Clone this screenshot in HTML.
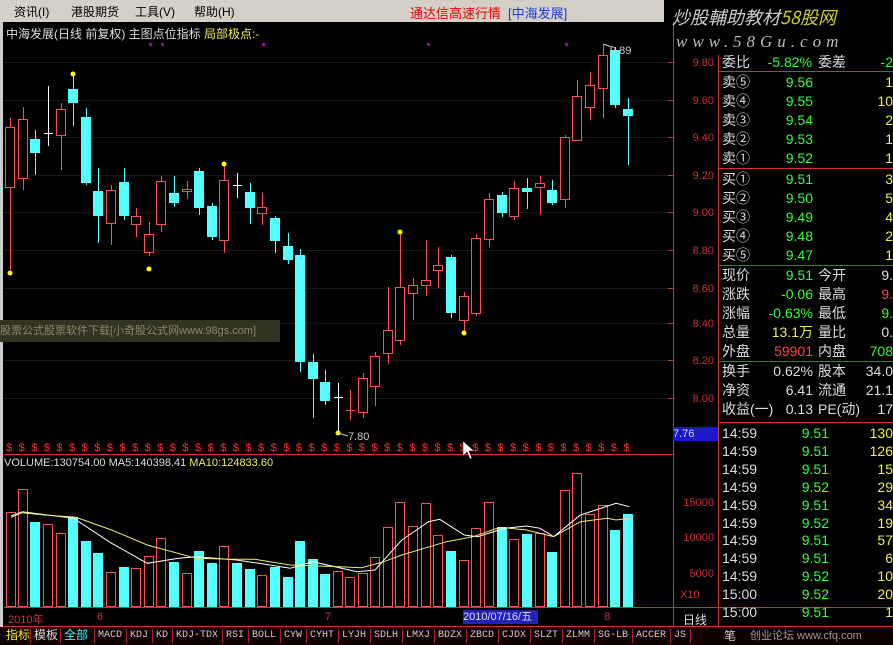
<!DOCTYPE html>
<html><head><meta charset="utf-8"><style>
body{margin:0;width:893px;height:645px;background:#000;overflow:hidden;position:relative;font-family:"Liberation Sans","Noto Sans CJK SC",sans-serif}
.a{position:absolute;white-space:nowrap}
#menu{position:absolute;left:0;top:0;width:664px;height:22px;background:#d4d0c8;font-size:12px}
.rp{position:absolute;font-size:14px;color:#ddd;line-height:19px}
</style></head><body>
<div id="menu">
<span class="a" style="left:14px;top:3px">资讯(I)</span>
<span class="a" style="left:71px;top:3px">港股期货</span>
<span class="a" style="left:135px;top:3px">工具(V)</span>
<span class="a" style="left:194px;top:3px">帮助(H)</span>
<span class="a" style="left:410px;top:3px;color:#e00;font-size:13px">通达信高速行情</span>
<span class="a" style="left:508px;top:3px;color:#1a3fd0;font-size:13px">[中海发展]</span>
</div>
<div class="a" style="left:0;top:22px;width:3px;height:605px;background:#ccc"></div>
<svg id="s" width="893" height="645" style="position:absolute;left:0;top:0" xmlns="http://www.w3.org/2000/svg"></svg>
<div class="a" style="left:672px;top:4px;font-size:18px;font-style:italic;color:#ccc;letter-spacing:0px;font-family:'Noto Sans CJK SC',sans-serif;z-index:5">炒股輔助教材<span style="color:#cc3">58股网</span></div>
<div class="a" style="left:676px;top:32px;font-size:17px;font-style:italic;color:#bbb;letter-spacing:5px;font-family:'Liberation Serif',serif;z-index:5">www.58Gu.com</div>
<div class="a" style="left:6px;top:25px;font-size:12px;color:#ddd">中海发展(日线 前复权) 主图点位指标 <span style="color:#ee6">局部极点:-</span></div>
<div class="a" style="left:0;top:320px;width:280px;height:22px;background:#333322;color:#888866;font-size:11px;line-height:22px">股票公式股票软件下载[小奇股公式网www.98gs.com]</div>
<div class="a" style="left:4px;top:457px;font-size:11px;color:#ddd">VOLUME:130754.00 MA5:140398.41 <span style="color:#ee6">MA10:124833.60</span></div>
<div class="a" style="left:610px;top:45px;font-size:11px;color:#ccc">9.89</div>
<div class="a" style="left:348px;top:431px;font-size:11px;color:#ccc">7.80</div>
<div class="a" style="left:673px;top:427px;width:45px;height:14px;background:#1a1acc;color:#ddd;font-size:11px;line-height:14px">7.76</div>
<div class="a" style="left:680px;top:589px;font-size:11px;color:#c33">X10</div>
<div class="a" style="left:8px;top:611px;font-size:11px;color:#c33">2010年</div>
<div class="a" style="left:97px;top:611px;font-size:11px;color:#c33">6</div>
<div class="a" style="left:325px;top:611px;font-size:11px;color:#c33">7</div>
<div class="a" style="left:463px;top:610px;width:75px;height:14px;background:#2222bb;color:#ddd;font-size:11px;line-height:14px">2010/07/16/五</div>
<div class="a" style="left:604px;top:611px;font-size:11px;color:#c33">8</div>
<div class="a" style="left:683px;top:611px;font-size:12px;color:#ddd">日线</div>
<div id="tabs" class="a" style="left:0;top:627px;width:893px;height:18px;background:#100;font-size:11px;line-height:18px;color:#ccc"></div>
<div id="rp"></div>
<script>
const S=document.getElementById('s');let h='';
function L(x1,y1,x2,y2,c,w){h+=`<line x1="${x1}" y1="${y1}" x2="${x2}" y2="${y2}" stroke="${c}" stroke-width="${w||1}"/>`}
function R(x,y,w,hh,f,st){h+=`<rect x="${x}" y="${y}" width="${w}" height="${hh}" fill="${f}" stroke="${st||'none'}"/>`}
function T(x,y,t,c,fs,anc){h+=`<text x="${x}" y="${y}" fill="${c}" font-size="${fs||11}" text-anchor="${anc||'start'}" font-family="Liberation Sans,sans-serif">${t}</text>`}
[62,100,137,175,212,250,288,323,360,398].forEach(y=>L(4,y+.5,672,y+.5,'#1a1a1a'));
[[62,'9.80'],[100,'9.60'],[137,'9.40'],[175,'9.20'],[212,'9.00'],[250,'8.80'],[288,'8.60'],[323,'8.40'],[360,'8.20'],[398,'8.00']].forEach(p=>{L(668,p[0]+.5,673,p[0]+.5,'#c33');T(714,p[0]+4,p[1],'#c33',11,'end')});
[[502,'15000'],[537,'10000'],[573,'5000']].forEach(p=>T(714,p[0]+4,p[1],'#c33',11,'end'));
L(673.5,22,673.5,627,'#c33');L(718.5,55,718.5,627,'#c33');
L(4,454.5,673,454.5,'#c33');L(4,607.5,893,607.5,'#c33');L(4,626.5,893,626.5,'#c33');
[71,168,265,361,422].forEach(y=>L(718,y+.5,893,y+.5,'#c33'));
const C=[[10,187,127,118,270,'r'],[23,178,119,107,190,'r'],[35,139,153,130,175,'c'],[48,133,133,86,146,'w'],[61,135,109,103,170,'r'],[73,89,103,76,126,'c'],[86,117,183,108,185,'c'],[98,191,216,168,243,'c'],[111,223,190,185,245,'r'],[124,182,216,168,220,'c'],[136,224,216,208,237,'r'],[149,252,234,222,256,'r'],[161,224,181,176,232,'r'],[174,193,203,176,207,'c'],[187,191,189,181,199,'r'],[199,171,208,168,215,'c'],[212,206,237,203,240,'c'],[224,240,180,163,253,'r'],[237,185,185,173,198,'w'],[250,192,208,183,224,'c'],[262,213,207,193,225,'r'],[275,218,241,216,253,'c'],[288,246,260,233,264,'c'],[300,255,362,249,372,'c'],[313,362,379,354,418,'c'],[325,382,401,370,405,'c'],[338,397,397,383,432,'w'],[350,411,410,390,420,'r'],[363,412,378,373,418,'r'],[375,386,356,352,406,'r'],[388,353,330,287,364,'r'],[400,340,287,231,345,'r'],[413,293,285,278,320,'r'],[426,285,280,240,296,'r'],[438,270,265,247,288,'r'],[451,257,313,255,318,'c'],[464,320,296,292,333,'r'],[476,313,238,234,316,'r'],[489,239,199,193,247,'r'],[502,195,213,192,217,'c'],[514,216,188,181,220,'r'],[527,188,192,178,209,'c'],[540,187,183,176,215,'r'],[552,190,203,180,205,'c'],[565,199,137,135,208,'r'],[577,140,96,80,140,'r'],[590,107,85,72,120,'r'],[603,88,55,45,118,'r'],[615,50,105,47,108,'c'],[628,109,116,98,165,'c']];
const RED='#ff5050',CY='#54ffff';
C.forEach(c=>{let[x,o,cl,hi,lo,t]=c;let top=Math.min(o,cl),bot=Math.max(o,cl);
 if(t=='w'){L(x+.5,hi,x+.5,lo,'#fff');L(x-4,o+.5,x+5,o+.5,'#fff');return}
 let col=t=='r'?RED:CY;L(x+.5,hi,x+.5,lo,col);
 if(t=='r'){if(bot-top<2)L(x-4,top+.5,x+5,top+.5,col);else R(x-4.5,top+.5,9,bot-top,'#000',col)}
 else R(x-5,top,10,Math.max(bot-top,2),col)});
[[10,273],[73,74],[149,269],[224,164],[338,433],[400,232],[464,333]].forEach(m=>h+=`<circle cx="${m[0]}" cy="${m[1]}" r="2.5" fill="#ff0"/>`);
L(338,433,348,436,'#ccc');L(603,44,612,47,'#ccc');
[150,162,263,428,566].forEach(x=>R(x-1,43,3,3,'#a0a'));
for(let x=6;x<635;x+=12.6)T(x,451,'$','#ff3030',11);
const V=[[11,512,'r'],[23,489,'r'],[35,522,'c'],[48,524,'r'],[61,533,'r'],[73,517,'c'],[86,541,'c'],[98,553,'c'],[111,572,'r'],[124,567,'c'],[136,568,'r'],[149,556,'r'],[161,538,'r'],[174,562,'c'],[187,573,'r'],[199,551,'c'],[212,563,'c'],[224,546,'r'],[237,563,'c'],[250,569,'c'],[262,575,'r'],[275,567,'c'],[288,577,'c'],[300,541,'c'],[313,559,'c'],[325,574,'c'],[338,571,'r'],[350,577,'r'],[363,573,'r'],[375,557,'r'],[388,527,'r'],[400,502,'r'],[413,526,'r'],[426,503,'r'],[438,535,'r'],[451,551,'c'],[464,560,'r'],[476,528,'r'],[489,502,'r'],[502,527,'c'],[514,539,'r'],[527,534,'c'],[540,533,'r'],[552,552,'c'],[565,490,'r'],[577,473,'r'],[590,514,'r'],[603,505,'r'],[615,530,'c'],[628,514,'c']];
V.forEach(v=>{if(v[2]=='r')R(v[0]-4.5,v[1]+.5,9,606-v[1],'#000',RED);else R(v[0]-5,v[1],10,607-v[1],CY)});
function P(pts,c){h+=`<polyline fill="none" stroke="${c}" stroke-width="1" points="${pts.map(p=>(p[0]/2.24).toFixed(1)+','+(440+p[1]/3).toFixed(1)).join(' ')}"/>`}
P([[25,228],[50,215],[165,235],[250,310],[330,370],[400,355],[440,350],[530,360],[580,370],[650,385],[700,365],[800,395],[840,390],[900,300],[960,245],[985,238],[1040,285],[1070,290],[1130,265],[1180,258],[1210,265],[1240,290],[1300,225],[1380,190],[1410,200]],'#fff');
P([[25,232],[50,218],[100,225],[170,232],[250,270],[330,315],[440,355],[520,358],[570,358],[650,375],[760,380],[810,383],[860,365],[900,345],[1000,305],[1060,290],[1120,262],[1180,270],[1240,290],[1300,245],[1360,235],[1380,240],[1410,235]],'#ee6');
h+=`<polygon points="463,441 463,456 467,452 470,459 472,458 469,451 474,451" fill="#fff" stroke="#000" stroke-width=".5"/>`;
S.innerHTML=h;
const tabs=[['指标','#ee3',12,28],['模板','#ddd',12,30],['全部','#3ff',12,34],'MACD','KDJ','KD','KDJ-TDX','RSI','BOLL','CYW','CYHT','LYJH','SDLH','LMXJ','BDZX','ZBCD','CJDX','SLZT','ZLMM','SG-LB','ACCER','JS'];
let tx=6,th='';tabs.forEach(t=>{let n,c='#ccc',fs=10,w;if(Array.isArray(t)){[n,c,fs,w]=t}else{n=t;w=n.length*6+8};th+=`<span class="a" style="left:${tx}px;top:0;color:${c};font-size:${fs}px;font-family:'Liberation Mono','Noto Sans CJK SC',monospace">${n}</span><span class="a" style="left:${tx+w-4}px;top:2px;width:1px;height:14px;background:#a22"></span>`;tx+=w});
th+=`<span class="a" style="left:724px;top:0;color:#ccc;font-size:12px">笔</span><span class="a" style="left:750px;top:0;color:#999;font-size:11px">创业论坛 www.cfq.com</span>`;
document.getElementById('tabs').innerHTML=th;
let r='';function rt(x,y,t,c,al){r+=`<div class="rp" style="${al=='r'?'right:'+(893-x):'left:'+x}px;top:${y-9}px;color:${c||'#ddd'}">${t}</div>`}
const G='#3f3',Y='#ee4',W='#ddd',RR='#f44';
rt(722,62,'委比');rt(812,62,'-5.82%',G,'r');rt(818,62,'委差');rt(893,62,'-2',G,'r');
const ob=[['卖⑤','9.56','1'],['卖④','9.55','10'],['卖③','9.54','2'],['卖②','9.53','1'],['卖①','9.52','1'],['买①','9.51','3'],['买②','9.50','5'],['买③','9.49','4'],['买④','9.48','2'],['买⑤','9.47','1']];
ob.forEach((o,i)=>{let y=82+i*19+(i>=5?2:0);rt(722,y,o[0]);rt(813,y,o[1],G,'r');rt(893,y,o[2],Y,'r')});
const st=[['现价','9.51',G,'今开','9.',W],['涨跌','-0.06',G,'最高','9.',RR],['涨幅','-0.63%',G,'最低','9.',G],['总量','13.1万',Y,'量比','0.',W],['外盘','59901',RR,'内盘','708',G]];
st.forEach((o,i)=>{let y=275+i*19;rt(722,y,o[0]);rt(813,y,o[1],o[2],'r');rt(818,y,o[3]);rt(893,y,o[4],o[5],'r')});
[['换手','0.62%','股本','34.0'],['净资','6.41','流通','21.1'],['收益(一)','0.13','PE(动)','17']].forEach((o,i)=>{let y=371+i*19;rt(722,y,o[0]);rt(813,y,o[1],W,'r');rt(818,y,o[2]);rt(893,y,o[3],W,'r')});
const tk=[['14:59','9.51','130'],['14:59','9.51','126'],['14:59','9.51','15'],['14:59','9.52','29'],['14:59','9.51','34'],['14:59','9.52','19'],['14:59','9.51','57'],['14:59','9.51','6'],['14:59','9.52','10'],['15:00','9.52','20'],['15:00','9.51','1']];
tk.forEach((o,i)=>{let y=433+i*17.9;rt(722,y,o[0]);rt(829,y,o[1],G,'r');rt(893,y,o[2],Y,'r')});
document.getElementById('rp').innerHTML=r;
</script>
</body></html>
